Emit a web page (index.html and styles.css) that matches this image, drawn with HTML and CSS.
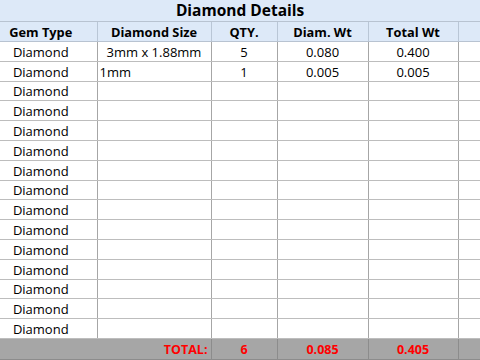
FILE: index.html
```html
<!DOCTYPE html>
<html>
<head>
<meta charset="utf-8">
<link rel="stylesheet" href="styles.css">
</head>
<body>
<table class="sheet">
  <colgroup>
    <col class="c1"><col class="c2"><col class="c3"><col class="c4"><col class="c5"><col class="c6">
  </colgroup>
  <tr class="title"><td colspan="6">Diamond Details</td></tr>
  <tr class="head">
    <td>Gem Type</td><td>Diamond Size</td><td>QTY.</td><td>Diam. Wt</td><td>Total Wt</td><td></td>
  </tr>
  <tr class="row"><td>Diamond</td><td>3mm x 1.88mm</td><td>5</td><td>0.080</td><td>0.400</td><td></td></tr>
  <tr class="row"><td>Diamond</td><td class="left">1mm</td><td>1</td><td>0.005</td><td>0.005</td><td></td></tr>
  <tr class="row"><td>Diamond</td><td></td><td></td><td></td><td></td><td></td></tr>
  <tr class="row"><td>Diamond</td><td></td><td></td><td></td><td></td><td></td></tr>
  <tr class="row"><td>Diamond</td><td></td><td></td><td></td><td></td><td></td></tr>
  <tr class="row"><td>Diamond</td><td></td><td></td><td></td><td></td><td></td></tr>
  <tr class="row"><td>Diamond</td><td></td><td></td><td></td><td></td><td></td></tr>
  <tr class="row"><td>Diamond</td><td></td><td></td><td></td><td></td><td></td></tr>
  <tr class="row"><td>Diamond</td><td></td><td></td><td></td><td></td><td></td></tr>
  <tr class="row"><td>Diamond</td><td></td><td></td><td></td><td></td><td></td></tr>
  <tr class="row"><td>Diamond</td><td></td><td></td><td></td><td></td><td></td></tr>
  <tr class="row"><td>Diamond</td><td></td><td></td><td></td><td></td><td></td></tr>
  <tr class="row"><td>Diamond</td><td></td><td></td><td></td><td></td><td></td></tr>
  <tr class="row"><td>Diamond</td><td></td><td></td><td></td><td></td><td></td></tr>
  <tr class="row"><td>Diamond</td><td></td><td></td><td></td><td></td><td></td></tr>
  <tr class="total">
    <td colspan="2" class="label">TOTAL:</td><td>6</td><td>0.085</td><td>0.405</td><td></td>
  </tr>
</table>
</body>
</html>
```
FILE: styles.css
```css
html, body {
  margin: 0;
  padding: 0;
  background: #ffffff;
  overflow: hidden;
}
.sheet {
  border-collapse: collapse;
  table-layout: fixed;
  width: 495px;
  margin-left: -15px;
  font-family: "Open Sans", "Liberation Sans", sans-serif;
  font-size: 13px;
  color: #000;
}
.c1 { width: 112px; }
.c2 { width: 114px; }
.c3 { width: 66px; }
.c4 { width: 91px; }
.c5 { width: 90px; }
.c6 { width: 22px; }
.sheet td {
  padding: 2px 2px 0;
  text-align: center;
  white-space: nowrap;
  overflow: hidden;
  border-left: 1px solid #a6a6a6;
  border-right: 1px solid #a6a6a6;
  border-bottom: 1px solid #bdbdbd;
  line-height: 1;
}
.title td {
  height: 20px;
  padding: 1px 0 0 15px;
  background: #dde9f8;
  font-weight: 700;
  font-size: 15.5px;
  border-left: none;
  border-right: none;
  border-bottom: 1px solid #b8c3d1;
}
.head td {
  height: 17px;
  background: #dde9f8;
  font-weight: 700;
  font-size: 12.8px;
  border-left-color: #b9c6d6;
  border-right-color: #b9c6d6;
  border-bottom: 1px solid #b8c3d1;
}
.row td {
  height: 16.8px;
}
.sheet td:first-child { border-left: none; }
.row td.left { text-align: left; }
.total td {
  height: 18px;
  background: #a6a6a6;
  color: #ff0000;
  font-weight: 700;
  font-size: 12.5px;
  border-left-color: #8c8c8c;
  border-right-color: #8c8c8c;
  border-bottom: 1px solid #8c8c8c;
}
.total td.label {
  text-align: right;
  padding-right: 3px;
}
```
